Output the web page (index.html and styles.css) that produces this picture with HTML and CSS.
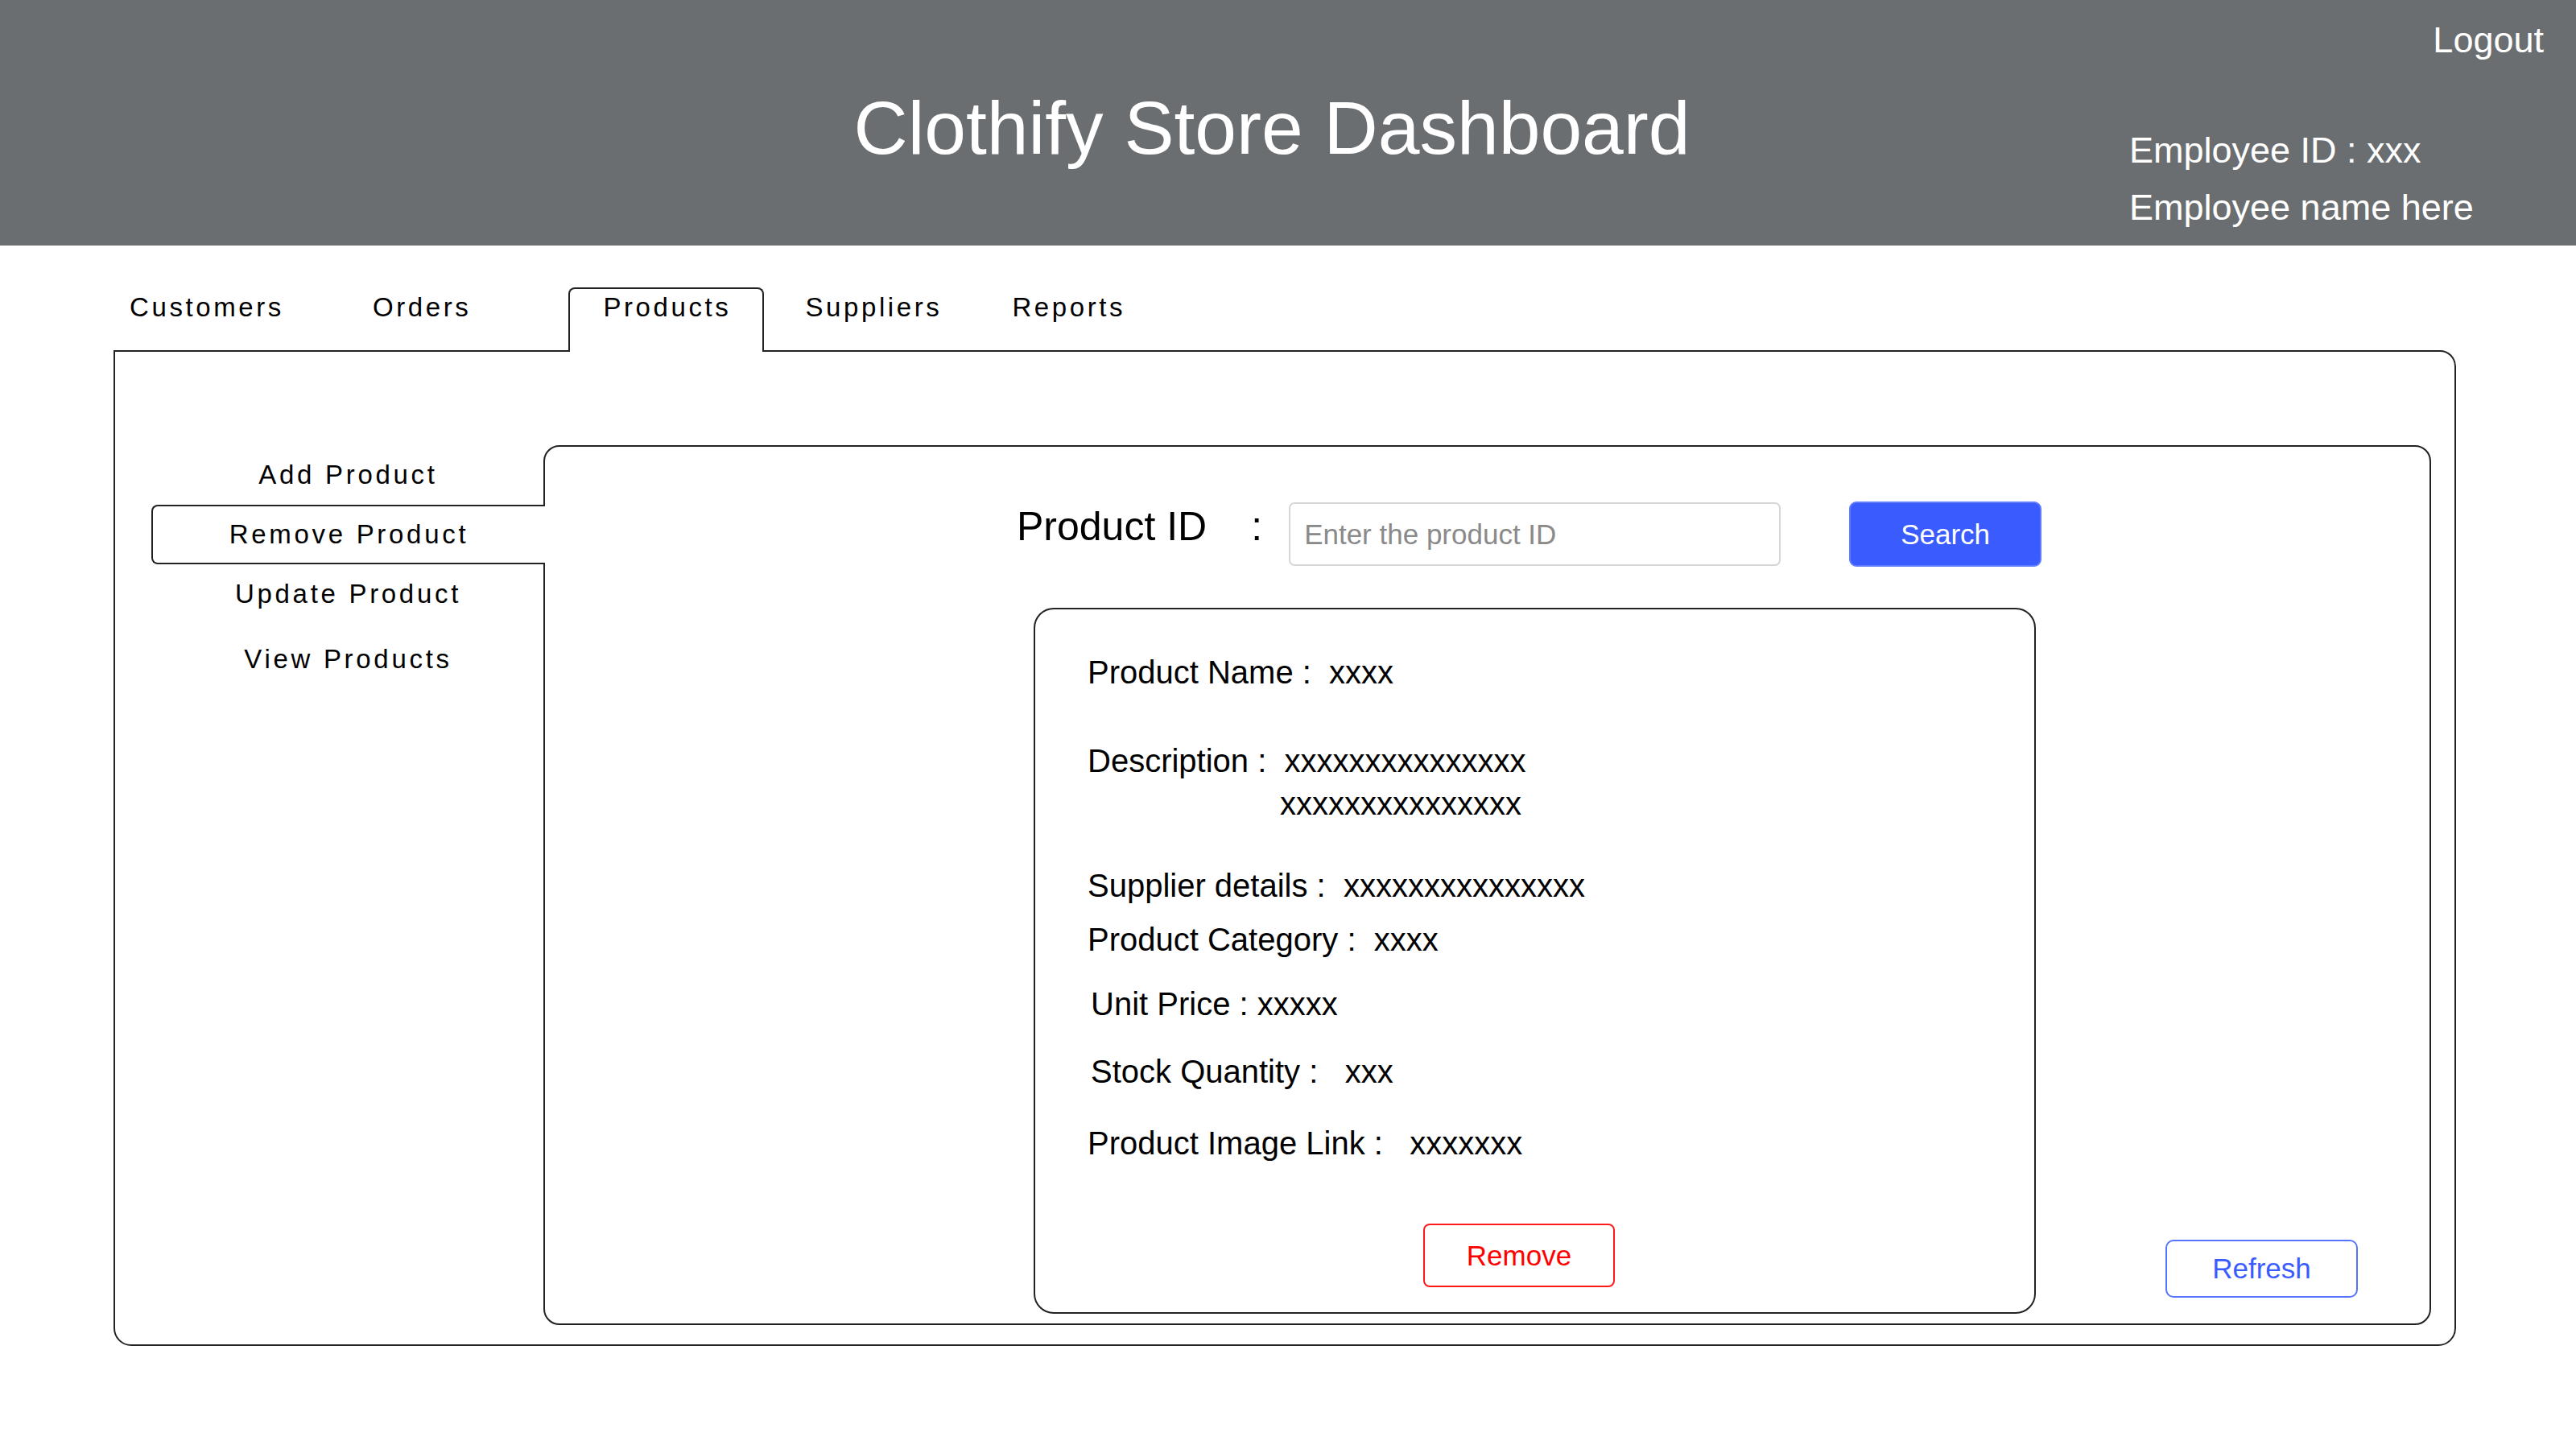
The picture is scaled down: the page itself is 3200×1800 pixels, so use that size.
FILE: index.html
```html
<!DOCTYPE html>
<html lang="en">
<head>
<meta charset="utf-8">
<title>Clothify Store Dashboard</title>
<link rel="stylesheet" href="styles.css">
</head>
<body>
<header class="topbar">
  <h1 class="title">Clothify Store Dashboard</h1>
  <div class="user">
    <div class="logout">Logout</div>
    <div class="emp-block">
      <div class="emp">Employee ID : xxx</div>
      <div class="emp">Employee name here</div>
    </div>
  </div>
</header>
<nav class="tabs">
  <div class="tab tab-customers">Customers</div>
  <div class="tab tab-orders">Orders</div>
  <div class="tab tab-products active">Products</div>
  <div class="tab tab-suppliers">Suppliers</div>
  <div class="tab tab-reports">Reports</div>
</nav>
<main class="frame">
  <aside class="side">
    <div class="side-item">Add Product</div>
    <div class="side-item active">Remove Product</div>
    <div class="side-item">Update Product</div>
    <div class="side-item side-last">View Products</div>
  </aside>
  <section class="panel">
    <div class="col">
      <div class="search-row">
        <span class="pid">Product ID</span><span class="colon">:</span>
        <input class="pid-input" type="text" placeholder="Enter the product ID">
        <button class="btn-search">Search</button>
      </div>
      <div class="card">
        <div class="row">Product Name :&nbsp; xxxx</div>
        <div class="row gap-desc">Description :&nbsp; xxxxxxxxxxxxxxx</div>
        <div class="row gap-desc2">xxxxxxxxxxxxxxx</div>
        <div class="row gap-supp">Supplier details :&nbsp; xxxxxxxxxxxxxxx</div>
        <div class="row gap-cat">Product Category :&nbsp; xxxx</div>
        <div class="row gap-price indent">Unit Price : xxxxx</div>
        <div class="row gap-stock indent">Stock Quantity :&nbsp;&nbsp; xxx</div>
        <div class="row gap-img">Product Image Link :&nbsp;&nbsp; xxxxxxx</div>
        <button class="btn-remove">Remove</button>
      </div>
    </div>
    <button class="btn-refresh">Refresh</button>
  </section>
</main>
</body>
</html>
```

FILE: styles.css
```css
* { box-sizing: border-box; }

html, body {
  margin: 0;
  padding: 0;
  background: #ffffff;
}

body {
  width: 3200px;
  height: 1800px;
  font-family: "Liberation Sans", Arial, sans-serif;
  color: #000;
  overflow: hidden;
}

/* ---------- header ---------- */
.topbar {
  height: 305px;
  background: #6b6e71;
  color: #fff;
  display: grid;
  grid-template-columns: 1fr auto 1fr;
}

.title {
  grid-column: 2;
  margin: 112px 40px 0 0;
  font-size: 93px;
  line-height: 94px;
  font-weight: normal;
  white-space: nowrap;
  align-self: start;
}

.user {
  grid-column: 3;
  justify-self: end;
  width: 555px;
}

.logout {
  margin-top: 27px;
  font-size: 45px;
  line-height: 45px;
  text-align: right;
  padding-right: 40px;
}

.emp-block {
  margin-top: 79px;
}

.emp {
  font-size: 45px;
  line-height: 71px;
  white-space: nowrap;
}

/* ---------- tabs ---------- */
.tabs {
  display: flex;
  padding: 52px 0 0 118px;
}

.tab {
  position: relative;
  height: 80px;
  margin-bottom: -2px;
  padding: 3px 39px 0 41px;
  border: 2px solid transparent;
  border-bottom: 0;
  font-size: 33px;
  line-height: 40px;
  letter-spacing: 3.6px;
  white-space: nowrap;
}

.tab.active {
  border-color: #222;
  border-radius: 8px 8px 0 0;
  background: #fff;
  z-index: 2;
}

.tab-orders { margin-left: 26px; }
.tab-products { margin-left: 80px; }
.tab-suppliers { margin-left: 8px; }
.tab-reports { margin-left: 3px; }

/* ---------- frame ---------- */
.frame {
  margin-left: 141px;
  width: 2910px;
  height: 1237px;
  border: 2px solid #222;
  border-radius: 0 20px 22px 22px;
  padding: 116px 29px 24px 45px;
  display: flex;
  align-items: flex-start;
}

.side {
  flex: none;
  width: 487px;
}

.side-item {
  position: relative;
  height: 74px;
  border: 2px solid transparent;
  border-right: 0;
  font-size: 33px;
  line-height: 70px;
  letter-spacing: 3.7px;
  text-align: center;
  white-space: nowrap;
}

.side-item.active {
  border-color: #222;
  border-radius: 8px 0 0 8px;
  margin-right: -2px;
  background: #fff;
  z-index: 2;
}

.side-last {
  margin-top: 7px;
}

.panel {
  flex: 1;
  height: 1093px;
  border: 2px solid #222;
  border-radius: 20px;
  display: flex;
  align-items: flex-end;
}

.col {
  align-self: flex-start;
  padding: 68px 0 12px 586px;
}

/* ---------- search row ---------- */
.search-row {
  display: flex;
  align-items: center;
  height: 81px;
}

.pid, .colon {
  font-size: 50px;
  line-height: 50px;
  padding-bottom: 20px;
  white-space: nowrap;
}

.colon {
  margin-left: 55px;
}

.pid-input {
  margin-left: 33px;
  width: 611px;
  height: 79px;
  border: 2px solid #d6d6d6;
  border-radius: 7px;
  padding: 0 0 0 17px;
  font-family: "Liberation Sans", Arial, sans-serif;
  font-size: 35px;
  color: #000;
  background: #fff;
  outline: none;
}

.pid-input::placeholder {
  color: #8a8a8a;
}

.btn-search {
  margin-left: 85px;
  width: 239px;
  height: 81px;
  border: 2px solid #5f7cff;
  border-radius: 9px;
  background: #3a5cff;
  color: #fff;
  font-family: "Liberation Sans", Arial, sans-serif;
  font-size: 35px;
  padding: 0;
}

/* ---------- detail card ---------- */
.card {
  margin: 51px 0 0 21px;
  width: 1245px;
  height: 877px;
  border: 2px solid #222;
  border-radius: 25px;
  padding: 55px 0 0 65px;
}

.row {
  font-size: 40px;
  line-height: 46px;
  white-space: nowrap;
}

.gap-desc { margin-top: 64px; }
.gap-desc2 { margin-top: 7px; padding-left: 239px; }
.gap-supp { margin-top: 56px; }
.gap-cat { margin-top: 21px; }
.gap-price { margin-top: 34px; }
.gap-stock { margin-top: 38px; }
.gap-img { margin-top: 43px; }
.indent { padding-left: 4px; }

.btn-remove {
  display: block;
  margin: 77px 0 0 417px;
  width: 238px;
  height: 79px;
  border: 2px solid #ff1a1a;
  border-radius: 8px;
  background: #fff;
  color: #ff0000;
  font-family: "Liberation Sans", Arial, sans-serif;
  font-size: 35px;
  padding: 0;
}

.btn-refresh {
  margin: 0 89px 32px auto;
  width: 239px;
  height: 72px;
  border: 2px solid #5473ff;
  border-radius: 10px;
  background: #fff;
  color: #3a5cff;
  font-family: "Liberation Sans", Arial, sans-serif;
  font-size: 35px;
  padding: 0;
}
```
